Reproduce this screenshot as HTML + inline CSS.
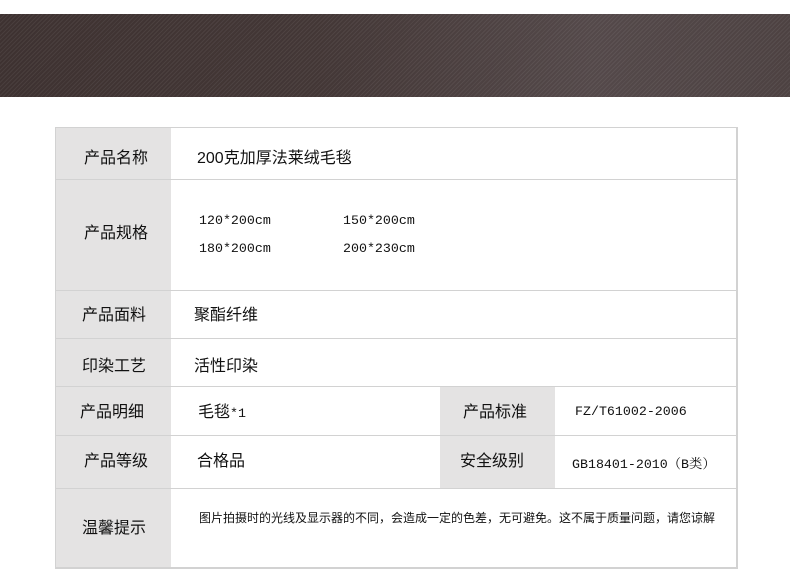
<!DOCTYPE html>
<html><head><meta charset="utf-8"><style>
body{margin:0;width:790px;height:586px;background:#fff;position:relative;overflow:hidden;font-family:"Liberation Sans","Noto Sans CJK SC",sans-serif;color:#111}
.b{position:absolute;left:0;top:14px;width:790px;height:83px;background:linear-gradient(90deg,#3e3231 0%,#433736 40%,#54494a 75%,#4d4242 100%)}
.b:after{content:"";position:absolute;inset:0;background:repeating-linear-gradient(135deg,rgba(255,255,255,.06) 0 1px,transparent 1px 3px)}
.g{position:absolute;background:#e4e3e3}
.h{position:absolute;left:55px;width:682px;height:1px;background:#d2d2d2}
.v{position:absolute;width:1px;background:#d2d2d2}
.t{position:absolute;font-size:16px;white-space:nowrap}
.m{font-family:"Liberation Mono","Noto Serif CJK SC",monospace;font-size:13.3px}
</style></head><body>
<div class="b"></div>
<div class="g" style="left:55px;top:127px;width:116px;height:441px"></div>
<div class="g" style="left:440px;top:386px;width:115px;height:102px"></div>
<div class="h" style="top:127px"></div>
<div class="h" style="top:179px"></div>
<div class="h" style="top:290px"></div>
<div class="h" style="top:338px"></div>
<div class="h" style="top:386px"></div>
<div class="h" style="top:435px"></div>
<div class="h" style="top:488px"></div>
<div class="h" style="top:567px;height:2px"></div>
<div class="v" style="left:55px;top:127px;height:442px"></div>
<div class="v" style="left:736px;top:127px;height:442px;width:2px"></div>
<div class="t" style="left:84px;top:144px">产品名称</div>
<div class="t" style="left:197px;top:144px">200克加厚法莱绒毛毯</div>
<div class="t" style="left:84px;top:219px">产品规格</div>
<div class="t m" style="left:199px;top:213px">120*200cm</div>
<div class="t m" style="left:343px;top:213px">150*200cm</div>
<div class="t m" style="left:199px;top:241px">180*200cm</div>
<div class="t m" style="left:343px;top:241px">200*230cm</div>
<div class="t" style="left:82px;top:301px">产品面料</div>
<div class="t" style="left:194px;top:301px">聚酯纤维</div>
<div class="t" style="left:82px;top:352px">印染工艺</div>
<div class="t" style="left:194px;top:352px">活性印染</div>
<div class="t" style="left:80px;top:398px">产品明细</div>
<div class="t" style="left:198px;top:398px">毛毯<span class="m">*1</span></div>
<div class="t" style="left:463px;top:398px">产品标准</div>
<div class="t m" style="left:575px;top:404px">FZ/T61002-2006</div>
<div class="t" style="left:84px;top:447px">产品等级</div>
<div class="t" style="left:197px;top:447px">合格品</div>
<div class="t" style="left:460px;top:447px">安全级别</div>
<div class="t m" style="left:572px;top:453px">GB18401-2010（B类）</div>
<div class="t" style="left:82px;top:514px">温馨提示</div>
<div class="t" style="left:199px;top:509px;font-size:12px">图片拍摄时的光线及显示器的不同，会造成一定的色差，无可避免。这不属于质量问题，请您谅解</div>
</body></html>
